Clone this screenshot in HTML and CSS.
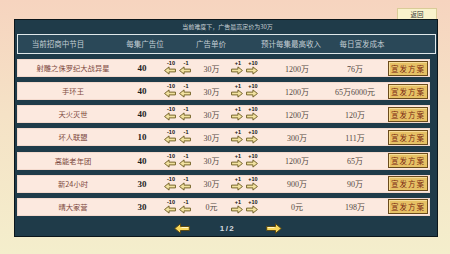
FILE: index.html
```html
<html>
<head>
<title>广告招商</title>
<link rel="stylesheet" href="styles.css">
</head>
<body>
<svg class="defs" width="0" height="0">
  <symbol id="arr" viewBox="0 0 13 9">
    <polygon points="0.6,4.5 5.5,0.6 5.5,3 12.4,3 12.4,6 5.5,6 5.5,8.4" fill="#f2e2a0" stroke="#6e5c22" stroke-width="1"/>
  </symbol>
  <symbol id="big" viewBox="0 0 16 11">
    <polygon points="0.7,5.5 6.5,0.7 6.5,3.5 15.3,3.5 15.3,7.5 6.5,7.5 6.5,10.3" fill="#f8d85c" stroke="#5c4a12" stroke-width="1"/>
    <polyline points="7.5,4.5 14.3,4.5" stroke="#fff6c8" stroke-width="1"/>
  </symbol>
</svg>

<div class="top"><div class="back">返回</div></div>

<div class="panel">
  <div class="title">当前难度下，广告最高定价为30万</div>

  <div class="head">
    <div class="h h-name">当前招商中节目</div>
    <div class="h h-slots">每集广告位</div>
    <div class="h h-price">广告单价</div>
    <div class="h h-income">预计每集最高收入</div>
    <div class="h h-cost">每日宣发成本</div>
  </div>

  <div class="rows">
    <div class="row">
      <div class="name">射雕之侏罗纪大战异星</div>
      <div class="num">40</div>
      <div class="step"><div class="st"><span>-10</span><svg class="ic"><use href="#arr"/></svg></div><div class="st"><span>-1</span><svg class="ic"><use href="#arr"/></svg></div></div>
      <div class="val">30万</div>
      <div class="step"><div class="st"><span>+1</span><svg class="ic flip"><use href="#arr"/></svg></div><div class="st"><span>+10</span><svg class="ic flip"><use href="#arr"/></svg></div></div>
      <div class="val">1200万</div>
      <div class="val">76万</div>
      <div class="act"><div class="btn">宣发方案</div></div>
    </div>
    <div class="row">
      <div class="name">手环王</div>
      <div class="num">40</div>
      <div class="step"><div class="st"><span>-10</span><svg class="ic"><use href="#arr"/></svg></div><div class="st"><span>-1</span><svg class="ic"><use href="#arr"/></svg></div></div>
      <div class="val">30万</div>
      <div class="step"><div class="st"><span>+1</span><svg class="ic flip"><use href="#arr"/></svg></div><div class="st"><span>+10</span><svg class="ic flip"><use href="#arr"/></svg></div></div>
      <div class="val">1200万</div>
      <div class="val">65万6000元</div>
      <div class="act"><div class="btn">宣发方案</div></div>
    </div>
    <div class="row">
      <div class="name">天火灭世</div>
      <div class="num">40</div>
      <div class="step"><div class="st"><span>-10</span><svg class="ic"><use href="#arr"/></svg></div><div class="st"><span>-1</span><svg class="ic"><use href="#arr"/></svg></div></div>
      <div class="val">30万</div>
      <div class="step"><div class="st"><span>+1</span><svg class="ic flip"><use href="#arr"/></svg></div><div class="st"><span>+10</span><svg class="ic flip"><use href="#arr"/></svg></div></div>
      <div class="val">1200万</div>
      <div class="val">120万</div>
      <div class="act"><div class="btn">宣发方案</div></div>
    </div>
    <div class="row">
      <div class="name">坏人联盟</div>
      <div class="num">10</div>
      <div class="step"><div class="st"><span>-10</span><svg class="ic"><use href="#arr"/></svg></div><div class="st"><span>-1</span><svg class="ic"><use href="#arr"/></svg></div></div>
      <div class="val">30万</div>
      <div class="step"><div class="st"><span>+1</span><svg class="ic flip"><use href="#arr"/></svg></div><div class="st"><span>+10</span><svg class="ic flip"><use href="#arr"/></svg></div></div>
      <div class="val">300万</div>
      <div class="val">111万</div>
      <div class="act"><div class="btn">宣发方案</div></div>
    </div>
    <div class="row">
      <div class="name">高能老年团</div>
      <div class="num">40</div>
      <div class="step"><div class="st"><span>-10</span><svg class="ic"><use href="#arr"/></svg></div><div class="st"><span>-1</span><svg class="ic"><use href="#arr"/></svg></div></div>
      <div class="val">30万</div>
      <div class="step"><div class="st"><span>+1</span><svg class="ic flip"><use href="#arr"/></svg></div><div class="st"><span>+10</span><svg class="ic flip"><use href="#arr"/></svg></div></div>
      <div class="val">1200万</div>
      <div class="val">65万</div>
      <div class="act"><div class="btn">宣发方案</div></div>
    </div>
    <div class="row">
      <div class="name">新24小时</div>
      <div class="num">30</div>
      <div class="step"><div class="st"><span>-10</span><svg class="ic"><use href="#arr"/></svg></div><div class="st"><span>-1</span><svg class="ic"><use href="#arr"/></svg></div></div>
      <div class="val">30万</div>
      <div class="step"><div class="st"><span>+1</span><svg class="ic flip"><use href="#arr"/></svg></div><div class="st"><span>+10</span><svg class="ic flip"><use href="#arr"/></svg></div></div>
      <div class="val">900万</div>
      <div class="val">90万</div>
      <div class="act"><div class="btn">宣发方案</div></div>
    </div>
    <div class="row">
      <div class="name">晴大家营</div>
      <div class="num">30</div>
      <div class="step"><div class="st"><span>-10</span><svg class="ic"><use href="#arr"/></svg></div><div class="st"><span>-1</span><svg class="ic"><use href="#arr"/></svg></div></div>
      <div class="val">0元</div>
      <div class="step"><div class="st"><span>+1</span><svg class="ic flip"><use href="#arr"/></svg></div><div class="st"><span>+10</span><svg class="ic flip"><use href="#arr"/></svg></div></div>
      <div class="val">0元</div>
      <div class="val">198万</div>
      <div class="act"><div class="btn">宣发方案</div></div>
    </div>
  </div>

  <div class="pager">
    <svg class="pg"><use href="#big"/></svg>
    <div class="page">1/2</div>
    <svg class="pg flip"><use href="#big"/></svg>
  </div>
</div>
</body>
</html>
```

FILE: styles.css
```css
body {
  margin: 0;
  width: 450px;
  height: 254px;
  overflow: hidden;
  font-family: "Noto Sans CJK SC", sans-serif;
  background: linear-gradient(to bottom, #f6d4bf 0%, #f5e2c6 45%, #f4eecc 100%);
}

.defs {
  position: absolute;
}

.top {
  display: flex;
  justify-content: flex-end;
  align-items: flex-end;
  width: 424px;
  height: 19px;
  margin-left: 14px;
}

.back {
  width: 40px;
  height: 11px;
  margin-right: 1px;
  box-sizing: border-box;
  border: 1px solid #d9cc98;
  border-bottom: none;
  background-color: #f9f2cc;
  color: #333;
  font-size: 6.5px;
  line-height: 10px;
  text-align: center;
}

.panel {
  width: 424px;
  height: 218px;
  margin-left: 14px;
  box-sizing: border-box;
  border: 1px solid #0b161b;
  background-color: #1f3b49;
  padding: 0 1px 0 2px;
}

.title {
  height: 14px;
  line-height: 14px;
  font-size: 6px;
  color: #c9d2d6;
  text-align: center;
  padding-left: 2px;
}

.head {
  display: flex;
  height: 20px;
  box-sizing: border-box;
  border: 1px solid #dfe8ea;
  background-color: #2a4858;
  color: #c3ced4;
  font-size: 7.5px;
  line-height: 18px;
}

.h {
  width: 64px;
  text-align: center;
  white-space: nowrap;
}

.h-name { margin-left: 8px; }
.h-slots { margin-left: 23px; }
.h-price { margin-left: 2px; }
.h-income { margin-left: 16px; }
.h-cost { margin-left: 7px; }

.rows {
  margin-top: 5px;
  margin-right: 6px;
}

.row {
  display: grid;
  grid-template-columns: 112px 26px 45px 23px 43px 62px 54px 1fr;
  align-items: center;
  height: 18px;
  margin-bottom: 5.17px;
  background-color: #fce9df;
  box-shadow: inset 0 0 0 1px #f3d9cd;
  white-space: nowrap;
}

.name {
  text-align: center;
  font-size: 7.3px;
  color: #7e4940;
}

.num {
  text-align: center;
  font-family: "Liberation Serif", serif;
  font-weight: bold;
  font-size: 9px;
  color: #1e1e1e;
}

.val {
  text-align: center;
  font-family: "Liberation Serif", "Noto Sans CJK SC", serif;
  font-size: 8px;
  color: #554a44;
}

.step {
  display: flex;
  justify-content: center;
  gap: 3px;
}

.st {
  display: flex;
  flex-direction: column;
  align-items: center;
}

.st span {
  font-family: "Liberation Sans", sans-serif;
  font-weight: bold;
  font-size: 5.5px;
  line-height: 5px;
  color: #111;
  margin-left: 2px;
}

.ic {
  width: 12px;
  height: 9px;
}

.flip {
  transform: scaleX(-1);
}

.act {
  padding-left: 6px;
}

.btn {
  width: 40px;
  height: 15px;
  box-sizing: border-box;
  border: 1px solid #6b4b1c;
  background-color: #e6c165;
  box-shadow: inset 1px 1px 0 #f6dc98;
  color: #7a2812;
  font-size: 7.5px;
  line-height: 13px;
  text-align: center;
  letter-spacing: 1px;
}

.pager {
  display: flex;
  justify-content: center;
  align-items: center;
  gap: 30px;
  height: 15px;
  padding-left: 2px;
}

.pg {
  width: 16px;
  height: 11px;
}

.page {
  font-family: "Liberation Sans", sans-serif;
  font-weight: bold;
  font-size: 8px;
  letter-spacing: 1.5px;
  color: #d6dce0;
  width: 16px;
  text-align: center;
}
```
